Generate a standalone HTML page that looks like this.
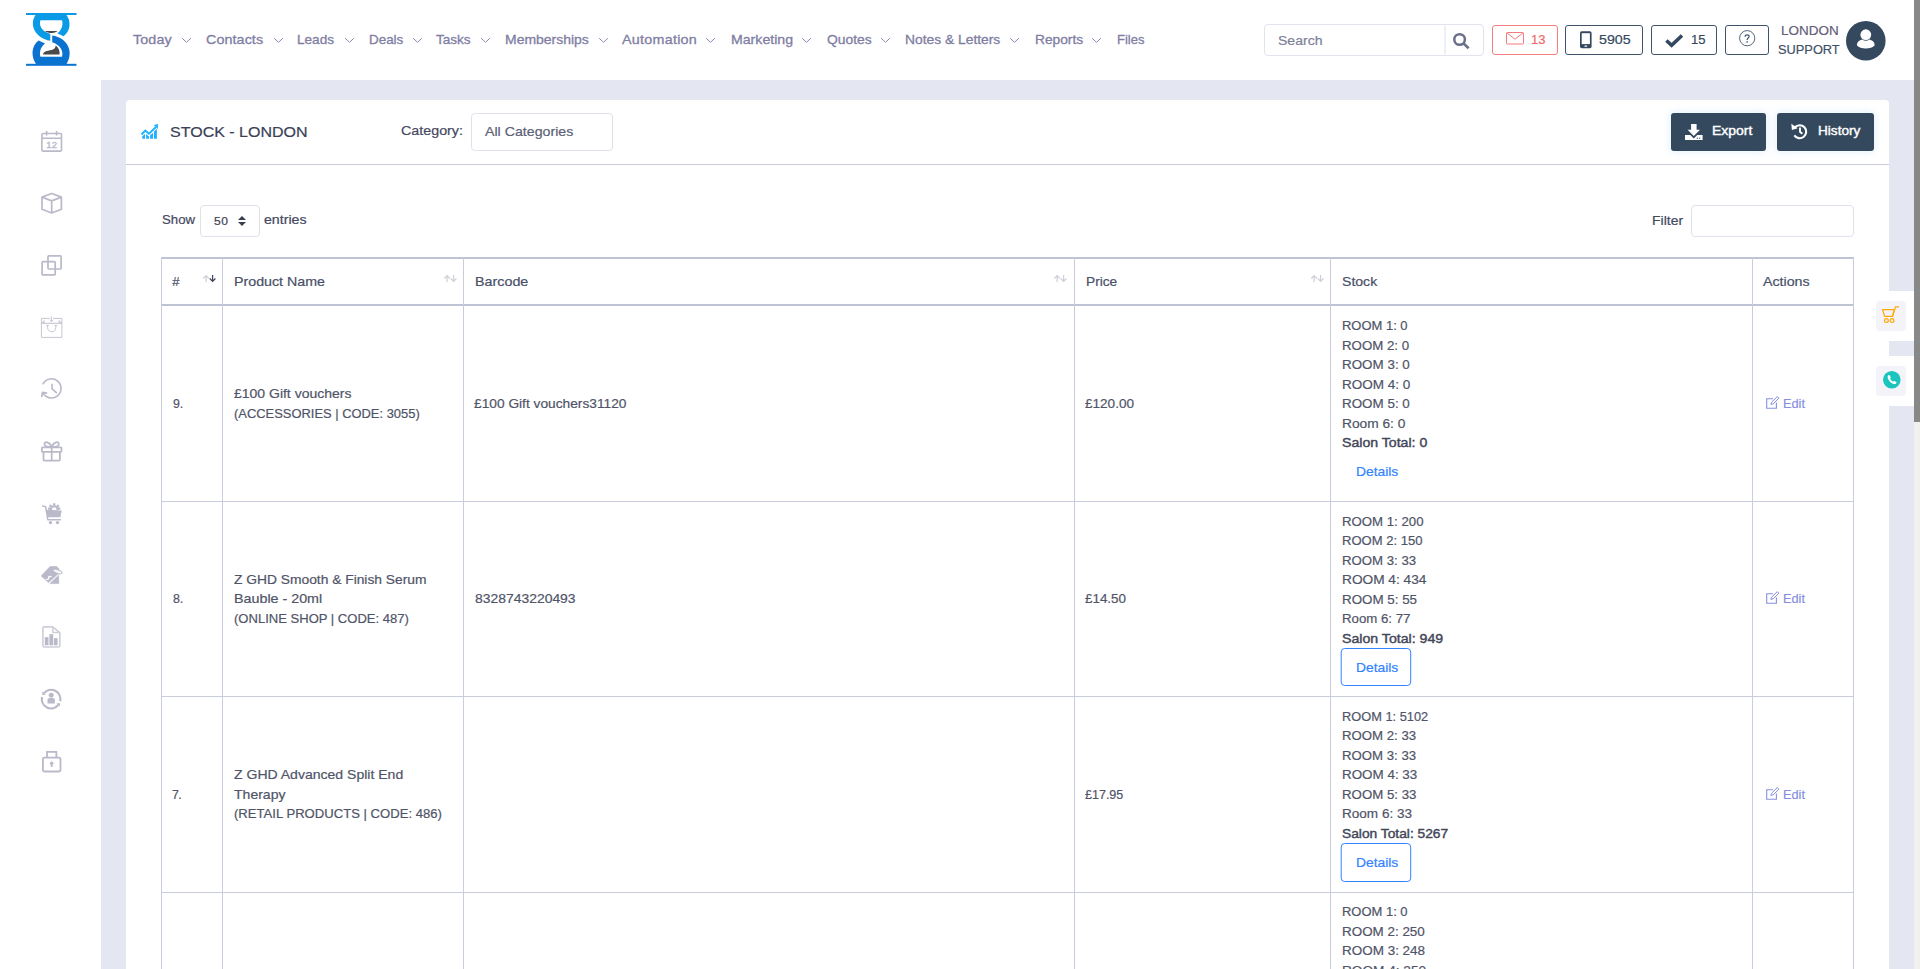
<!DOCTYPE html>
<html lang="en">
<head>
<meta charset="utf-8">
<title>Stock - London</title>
<style>
html,body{margin:0;padding:0;}
body{width:1920px;height:969px;overflow:hidden;position:relative;background:#e4e7f1;font-family:"Liberation Sans",sans-serif;}
.a{position:absolute;box-sizing:border-box;}
.t{position:absolute;white-space:nowrap;line-height:1;transform-origin:0 0;-webkit-text-stroke:0.2px currentColor;font-family:"Liberation Sans",sans-serif;}
svg{position:absolute;overflow:visible;}
.vl{position:absolute;width:1px;background:#c8ccdb;}
.hl{position:absolute;height:1px;background:#c8ccdb;}
.hl2{position:absolute;height:2px;background:#bfc4d5;}
.btn-d{position:absolute;box-sizing:border-box;border:1px solid #3283ff;border-radius:4px;background:#fff;}
</style>
</head>
<body>
<div class="a" style="left:0;top:0;width:1914px;height:80px;background:#fff;"></div>
<div class="a" style="left:0;top:80px;width:101px;height:889px;background:#fff;"></div>
<svg style="left:26px;top:12px" width="51" height="55" viewBox="0 0 51 55">
<rect x="0" y="1" width="50.5" height="2" fill="#0a9ae6"/>
<rect x="0" y="51.8" width="50.5" height="2" fill="#0a72cf"/>
<path d="M9.5 3 H40.5 C45 9 45 19 37.5 24.2 L31.3 21.3 C37 17 37 11 36 8.2 H14.5 C13 12 14 18.5 24.3 22 V28.8 C9 26 3 13 9.500 3 Z" fill="#0a9ae6"/>
<path d="M26.2 23.5 C42 26 48 40 40.5 52 H10 C5 45 5 34 12.600 28.600 L19 31.600 C13.500 36 13.500 42 14.500 44.800 H36 C37.500 40 35.500 33.500 26.200 30.300 Z" fill="#0a72cf"/>
<path d="M19 19 H31.5 C28 21.8 22.5 21.8 19 19 Z" fill="#4a4a4a"/>
<path d="M17 42.500 C17.500 38.500 23 39 27 37.500 C29 36.500 29.500 35 29.800 33.500 C33 36 34 39.500 33.500 42.500 Z" fill="#4a4a4a"/>
</svg>
<svg style="left:182.0px;top:38.3px" width="9" height="5" viewBox="0 0 9 5"><path d="M0.4 0.5 L4.5 4.3 L8.6 0.5" fill="none" stroke="#8c8aad" stroke-width="1" stroke-linecap="round" stroke-linejoin="round"/></svg>
<svg style="left:273.5px;top:38.3px" width="9" height="5" viewBox="0 0 9 5"><path d="M0.4 0.5 L4.5 4.3 L8.6 0.5" fill="none" stroke="#8c8aad" stroke-width="1" stroke-linecap="round" stroke-linejoin="round"/></svg>
<svg style="left:344.5px;top:38.3px" width="9" height="5" viewBox="0 0 9 5"><path d="M0.4 0.5 L4.5 4.3 L8.6 0.5" fill="none" stroke="#8c8aad" stroke-width="1" stroke-linecap="round" stroke-linejoin="round"/></svg>
<svg style="left:413.0px;top:38.3px" width="9" height="5" viewBox="0 0 9 5"><path d="M0.4 0.5 L4.5 4.3 L8.6 0.5" fill="none" stroke="#8c8aad" stroke-width="1" stroke-linecap="round" stroke-linejoin="round"/></svg>
<svg style="left:480.8px;top:38.3px" width="9" height="5" viewBox="0 0 9 5"><path d="M0.4 0.5 L4.5 4.3 L8.6 0.5" fill="none" stroke="#8c8aad" stroke-width="1" stroke-linecap="round" stroke-linejoin="round"/></svg>
<svg style="left:598.5px;top:38.3px" width="9" height="5" viewBox="0 0 9 5"><path d="M0.4 0.5 L4.5 4.3 L8.6 0.5" fill="none" stroke="#8c8aad" stroke-width="1" stroke-linecap="round" stroke-linejoin="round"/></svg>
<svg style="left:706.0px;top:38.3px" width="9" height="5" viewBox="0 0 9 5"><path d="M0.4 0.5 L4.5 4.3 L8.6 0.5" fill="none" stroke="#8c8aad" stroke-width="1" stroke-linecap="round" stroke-linejoin="round"/></svg>
<svg style="left:802.3px;top:38.3px" width="9" height="5" viewBox="0 0 9 5"><path d="M0.4 0.5 L4.5 4.3 L8.6 0.5" fill="none" stroke="#8c8aad" stroke-width="1" stroke-linecap="round" stroke-linejoin="round"/></svg>
<svg style="left:881.0px;top:38.3px" width="9" height="5" viewBox="0 0 9 5"><path d="M0.4 0.5 L4.5 4.3 L8.6 0.5" fill="none" stroke="#8c8aad" stroke-width="1" stroke-linecap="round" stroke-linejoin="round"/></svg>
<svg style="left:1010.3px;top:38.3px" width="9" height="5" viewBox="0 0 9 5"><path d="M0.4 0.5 L4.5 4.3 L8.6 0.5" fill="none" stroke="#8c8aad" stroke-width="1" stroke-linecap="round" stroke-linejoin="round"/></svg>
<svg style="left:1092.0px;top:38.3px" width="9" height="5" viewBox="0 0 9 5"><path d="M0.4 0.5 L4.5 4.3 L8.6 0.5" fill="none" stroke="#8c8aad" stroke-width="1" stroke-linecap="round" stroke-linejoin="round"/></svg>
<div class="a" style="left:1264px;top:24px;width:220px;height:32px;border:1px solid #e1e3ee;border-radius:4px;background:#fff;"></div>
<div class="a" style="left:1444px;top:25px;width:2px;height:30px;background:#eff0f7;"></div>
<svg style="left:1453px;top:33px" width="16" height="16" viewBox="0 0 16 16"><circle cx="6.600" cy="6.500" r="5.300" fill="none" stroke="#6a6f8a" stroke-width="2.500"/><path d="M10.500 10.400 L15.600 15.300" stroke="#6a6f8a" stroke-width="2.700" stroke-linecap="butt"/></svg>
<div class="a" style="left:1492px;top:25px;width:66px;height:30px;border:1px solid #f27e82;border-radius:3px;background:#fff;"></div>
<svg style="left:1505.500px;top:32.200px" width="18" height="12.500" viewBox="0 0 18 12.500"><rect x="0.500" y="0.500" width="17" height="11.500" rx="1" fill="none" stroke="#f47a7e" stroke-width="1"/><path d="M0.800 0.800 L9 7.200 L17.200 0.800" fill="none" stroke="#f47a7e" stroke-width="1"/></svg>
<div class="a" style="left:1565px;top:25px;width:78px;height:30px;border:1px solid #40536b;border-radius:3px;background:#fff;"></div>
<svg style="left:1579.600px;top:31.300px" width="11.600" height="17.600" viewBox="0 0 11.600 17"><rect x="0" y="0" width="11.600" height="17" rx="1.800" fill="#34495e"/><rect x="1.700" y="1.900" width="8.200" height="10.900" fill="#fff"/><rect x="4.400" y="14.200" width="2.800" height="1.300" rx="0.600" fill="#fff"/></svg>
<div class="a" style="left:1651px;top:25px;width:66px;height:30px;border:1px solid #40536b;border-radius:3px;background:#fff;"></div>
<svg style="left:1665px;top:33.800px" width="18.500" height="13.200" viewBox="0 0 18.500 13.200"><path d="M1.400 6.500 L6.600 11.300 L17 1.500" fill="none" stroke="#34495e" stroke-width="3.600" stroke-linejoin="miter"/></svg>
<div class="a" style="left:1725px;top:25px;width:44px;height:30px;border:1px solid #40536b;border-radius:3px;background:#fff;"></div>
<svg style="left:1739px;top:29.600px" width="16.400" height="16.400" viewBox="0 0 16.400 16.400"><circle cx="8.200" cy="8.200" r="7.600" fill="none" stroke="#44566e" stroke-width="0.900"/><path d="M6.100 6.700 C6.100 5.400 7 4.800 8.100 4.800 C9.300 4.800 10.100 5.500 10.100 6.500 C10.100 8 8.100 8.100 8.100 9.900" fill="none" stroke="#44566e" stroke-width="1.200"/><circle cx="8.100" cy="11.900" r="0.800" fill="#44566e"/></svg>
<svg style="left:1845.800px;top:20.600px" width="39.600" height="39.600" viewBox="0 0 39.600 39.600"><circle cx="19.800" cy="19.800" r="19.800" fill="#34495e"/><circle cx="19.800" cy="13.700" r="5.400" fill="#fff"/><path d="M10.900 24.300 C10.900 20.500 14.500 18.900 16.300 18.600 C18.300 20.300 21.300 20.300 23.300 18.600 C25.100 18.900 28.700 20.500 28.700 24.300 C27 26.600 23.500 27.600 19.800 27.600 C16.100 27.600 12.600 26.600 10.900 24.300 Z" fill="#fff"/></svg>
<svg style="left:41px;top:130.8px" width="21.4" height="20.4" viewBox="0 0 21.4 20.4"><rect x="0.900" y="2.500" width="19.600" height="17.600" rx="1" fill="none" stroke="#b9b9c9" stroke-width="1.600"/><path d="M0.900 7.200 H20.500 M5.600 0 V4.600 M15.600 0 V4.600" stroke="#b9b9c9" stroke-width="1.600" fill="none"/><text x="10.700" y="17.100" font-family="Liberation Sans" font-size="9.600" fill="#b9b9c9" stroke="#b9b9c9" stroke-width="0.350" text-anchor="middle">12</text></svg>
<svg style="left:41px;top:192.8px" width="21.4" height="20.4" viewBox="0 0 21.4 20.4"><path d="M10.700 0.500 L20.400 4.100 V16.300 L10.700 20 L1 16.300 V4.100 Z M1 4.100 L10.700 7.900 L20.400 4.100 M10.700 7.900 V20" fill="none" stroke="#b9b9c9" stroke-width="1.700" stroke-linejoin="round"/></svg>
<svg style="left:41px;top:254.8px" width="21.4" height="20.4" viewBox="0 0 21.4 20.4"><rect x="7" y="0.800" width="13.100" height="13.200" rx="0.900" fill="none" stroke="#b9b9c9" stroke-width="1.700"/><rect x="1.100" y="6.600" width="13.100" height="13.300" rx="0.900" fill="none" stroke="#b9b9c9" stroke-width="1.700"/></svg>
<svg style="left:41px;top:316px" width="21.400" height="22" viewBox="0 0 21.400 22"><path d="M8.700 2.400 H0.400 V21.400 H20.900 V2.400 H12.100" fill="none" stroke="#c6c6d3" stroke-width="1"/><path d="M0.400 7.300 H20.900" stroke="#c6c6d3" stroke-width="1.100"/><path d="M10.400 0.300 V5.600 M8.500 3.800 L10.400 5.700 L12.300 3.800" fill="none" stroke="#c6c6d3" stroke-width="1"/><path d="M0.600 7 L3.300 4.300 V7 Z M20.700 7 L18 4.300 V7 Z" fill="#d6d6e0" stroke="#c6c6d3" stroke-width="0.600"/><path d="M6.600 9.400 V11.500 C6.600 17.300 14.800 17.300 14.800 11.500 V9.400 M5.200 9.400 H8 M13.400 9.400 H16.200" fill="none" stroke="#c6c6d3" stroke-width="1"/></svg>
<svg style="left:41px;top:378.3px" width="21.4" height="21.4" viewBox="0 0 21.4 21.4"><path d="M2.100 5.700 A9.600 9.600 0 1 1 2 15" fill="none" stroke="#b9b9c9" stroke-width="1.600" stroke-linecap="round"/><path d="M0.800 18.300 L1.500 14.300 L5.500 15.100" fill="none" stroke="#b9b9c9" stroke-width="1.700" stroke-linecap="round" stroke-linejoin="round"/><path d="M11.100 5.800 V10.900 L15.900 15.100" fill="none" stroke="#b9b9c9" stroke-width="1.600"/></svg>
<svg style="left:41px;top:440.8px" width="21.4" height="20.4" viewBox="0 0 21.4 20.4"><rect x="0.900" y="6.300" width="19.600" height="4.600" rx="0.800" fill="none" stroke="#b9b9c9" stroke-width="1.800"/><path d="M2.500 10.900 V18.600 Q2.500 19.600 3.500 19.600 H17.900 Q18.900 19.600 18.900 18.600 V10.900" fill="none" stroke="#b9b9c9" stroke-width="1.800"/><path d="M10.700 6.300 V19.600" stroke="#b9b9c9" stroke-width="1.700"/><path d="M10.700 6.100 C8.800 0.600 3.300 -0.300 3.500 3.300 C3.700 5.900 7.500 6.100 10.700 6.100 C12.600 0.600 18.100 -0.300 17.900 3.300 C17.700 5.900 13.900 6.100 10.700 6.100 Z" fill="none" stroke="#b9b9c9" stroke-width="1.800"/></svg>
<svg style="left:41.500px;top:502.500px" width="20.500" height="21.500" viewBox="0 0 20.500 21.500"><defs><clipPath id="gc"><rect x="0" y="-1" width="21" height="7.900"/></clipPath></defs><path d="M0.600 2.900 L3.600 3.700 L5.800 16.700 H18.400" fill="none" stroke="#b9b9c9" stroke-width="1.500" stroke-linecap="round" stroke-linejoin="round"/><path d="M4.300 6.800 L19.700 7.600 L18.400 14.300 H5.600 Z" fill="#b9b9c9"/><circle cx="8.500" cy="19.600" r="1.700" fill="#b9b9c9"/><circle cx="15.500" cy="19.600" r="1.700" fill="#b9b9c9"/><g clip-path="url(#gc)"><circle cx="12.200" cy="6.600" r="3.300" fill="none" stroke="#b9b9c9" stroke-width="2.100"/><path d="M12.200 0.200 V2.500 M7.700 2.100 L9.300 3.700 M16.700 2.100 L15.100 3.700 M6.100 5.600 H8.400 M18.300 5.600 H16" stroke="#b9b9c9" stroke-width="2.300"/></g></svg>
<svg style="left:41px;top:566px" width="22" height="18.500" viewBox="0 0 22 18.500"><path d="M9 0.600 H15.700 L17.800 2.500 L18 7 L7.600 16.600 L0.100 9.900 Z" fill="#b9b9c9" stroke="#b9b9c9" stroke-width="0.600" stroke-linejoin="round"/><path d="M17.600 9.200 L17.800 17.600 H8.900 Z" fill="#b9b9c9" stroke="#b9b9c9" stroke-width="0.600" stroke-linejoin="round"/><path d="M5.400 13.400 L7.400 13.200 L7.900 10.700 L10 10.500" fill="none" stroke="#fff" stroke-width="1.300" stroke-linecap="round" stroke-linejoin="round"/><ellipse cx="16.400" cy="5.500" rx="4.700" ry="1.900" transform="rotate(20 16.400 5.500)" fill="#fff" fill-opacity="0.850" stroke="#b9b9c9" stroke-width="1.200"/></svg>
<svg style="left:42.300px;top:626px" width="18.600" height="21.800" viewBox="0 0 18.600 21.800"><path d="M2.300 0.900 H10.700 L17.800 6.600 V19.600 Q17.800 21 16.400 21 H2.300 Q0.900 21 0.900 19.600 V2.300 Q0.900 0.900 2.300 0.900 Z" fill="none" stroke="#cdced9" stroke-width="1.600" stroke-linejoin="round"/><path d="M10.900 1.200 V6.400 H17.400" fill="none" stroke="#cdced9" stroke-width="1.500"/><rect x="2.800" y="11.200" width="3.700" height="8.100" fill="#b9b9c9"/><rect x="7.400" y="8.200" width="3.800" height="11.100" fill="#b9b9c9"/><rect x="11.900" y="12.200" width="3.700" height="7.100" fill="#b9b9c9"/></svg>
<svg style="left:40.400px;top:688px" width="22.200" height="22.200" viewBox="0 0 22.200 22.200"><path d="M3.980 5.120 A9.300 9.300 0 0 1 20.160 13.190" fill="none" stroke="#b9b9c9" stroke-width="2.200"/><path d="M18.220 17.080 A9.300 9.300 0 0 1 2.040 9.010" fill="none" stroke="#b9b9c9" stroke-width="2.200"/><path d="M2.140 3.580 L5.820 6.660 L2.310 7.110 Z" fill="#b9b9c9"/><path d="M20.060 18.620 L16.380 15.540 L19.890 15.090 Z" fill="#b9b9c9"/><circle cx="11.200" cy="7.200" r="2.500" fill="#b9b9c9"/><path d="M7.500 15.500 V12 C7.500 10.600 8.600 10.100 11.200 10.100 C13.800 10.100 14.900 10.600 14.900 12 V15.500 Z" fill="#b9b9c9"/></svg>
<svg style="left:41.9px;top:750.7px" width="19.4" height="21.4" viewBox="0 0 19.4 21.4"><rect x="0.900" y="6.600" width="17.600" height="13.900" rx="1.500" fill="none" stroke="#b9b9c9" stroke-width="1.800"/><path d="M5 6.600 V0.900 H14.400 V6.600" fill="none" stroke="#b9b9c9" stroke-width="1.800"/><circle cx="9.700" cy="12.300" r="1.700" fill="#b9b9c9"/><rect x="8.800" y="12.500" width="1.800" height="3.600" rx="0.600" fill="#b9b9c9"/></svg>
<div class="a" style="left:126px;top:100px;width:1763px;height:900px;background:#fff;border-radius:4px 4px 0 0;"></div>
<div class="hl" style="left:126px;top:164px;width:1763px;background:#c7cbdb;"></div>
<svg style="left:141px;top:124px" width="17.200" height="15" viewBox="0 0 17.200 15"><path d="M0.500 10.500 L4.400 6.500 L7.900 9.600 L15 3" fill="none" stroke="#1fb0ff" stroke-width="1.900"/><path d="M12.700 1.100 L17 0 L16.900 4.900 Z" fill="#1fb0ff"/><path d="M1.300 14.800 V12.300 L4 10.100 V14.800 Z M5.100 14.800 V10.100 L8 12.500 V14.800 Z M9.100 14.800 V11.300 L12 8.800 V14.800 Z M13 14.800 V7.500 L15.900 4.800 V14.800 Z" fill="#1fb0ff"/></svg>
<div class="a" style="left:471px;top:113px;width:142px;height:38px;border:1px solid #dfe2ec;border-radius:4px;background:#fff;"></div>
<div class="a" style="left:1671px;top:113px;width:95px;height:38px;border-radius:3px;background:#34495e;box-shadow:0 0 10px rgba(150,200,245,0.32);"></div>
<div class="a" style="left:1777px;top:113px;width:97px;height:38px;border-radius:3px;background:#34495e;box-shadow:0 0 10px rgba(150,200,245,0.32);"></div>
<svg style="left:1684.600px;top:123.900px" width="17.600" height="16.100" viewBox="0 0 17.600 16.100"><path d="M6.100 0 H11.600 V5.700 H15 L8.800 12 L2.600 5.700 H6.100 Z" fill="#fff"/><path d="M0 11.100 H5.300 L8.800 14.600 L12.300 11.100 H17.600 V16.100 H0 Z" fill="#fff"/><rect x="11.700" y="13.700" width="1.300" height="1" fill="#34495e"/><rect x="14" y="13.700" width="1.300" height="1" fill="#34495e"/></svg>
<svg style="left:1790.600px;top:123.300px" width="17" height="16.500" viewBox="0 0 17 16.500"><path d="M3.900 4.300 A6.500 6.500 0 1 1 3.300 12.300" fill="none" stroke="#fff" stroke-width="2.100"/><path d="M0.300 0.800 L0.900 7 L6.800 5.300 Z" fill="#fff"/><path d="M9 4.500 V8.700 L11.400 10.700" fill="none" stroke="#fff" stroke-width="1.900"/></svg>
<div class="a" style="left:199.500px;top:205px;width:60px;height:31.500px;border:1px solid #dfe2ec;border-radius:4px;background:#fff;"></div>
<svg style="left:238.300px;top:216.200px" width="8" height="10" viewBox="0 0 8 10"><path d="M0 4 L4 0 L8 4 Z M0 6 L4 10 L8 6 Z" fill="#3a3d50"/></svg>
<div class="a" style="left:1691px;top:205px;width:163px;height:32px;border:1px solid #dfe2ec;border-radius:4px;background:#fff;"></div>
<div class="hl2" style="left:161px;top:257px;width:1693px;"></div>
<div class="hl2" style="left:161px;top:304px;width:1693px;"></div>
<div class="hl" style="left:161px;top:501px;width:1693px;"></div>
<div class="hl" style="left:161px;top:696px;width:1693px;"></div>
<div class="hl" style="left:161px;top:892px;width:1693px;"></div>
<div class="vl" style="left:161px;top:257px;height:712px;"></div>
<div class="vl" style="left:222px;top:257px;height:712px;"></div>
<div class="vl" style="left:463px;top:257px;height:712px;"></div>
<div class="vl" style="left:1074px;top:257px;height:712px;"></div>
<div class="vl" style="left:1330px;top:257px;height:712px;"></div>
<div class="vl" style="left:1752px;top:257px;height:712px;"></div>
<div class="vl" style="left:1853px;top:257px;height:712px;"></div>
<svg style="left:203.0px;top:275px" width="13" height="7" viewBox="0 0 13 7"><path d="M3.1 7 V0.8 M0.3 3.5 L3.1 0.6 L5.900 3.500" fill="none" stroke="#cfd0d8" stroke-width="1.200"/><path d="M9.600 0 V6.200 M6.800 3.500 L9.600 6.400 L12.400 3.500" fill="none" stroke="#3f4254" stroke-width="1.200"/></svg>
<svg style="left:443.5px;top:275px" width="13" height="7" viewBox="0 0 13 7"><path d="M3.1 7 V0.8 M0.3 3.5 L3.1 0.6 L5.900 3.500" fill="none" stroke="#cfd0d8" stroke-width="1.200"/><path d="M9.600 0 V6.200 M6.800 3.500 L9.600 6.400 L12.400 3.500" fill="none" stroke="#cfd0d8" stroke-width="1.200"/></svg>
<svg style="left:1054.3px;top:275px" width="13" height="7" viewBox="0 0 13 7"><path d="M3.1 7 V0.8 M0.3 3.5 L3.1 0.6 L5.900 3.500" fill="none" stroke="#cfd0d8" stroke-width="1.200"/><path d="M9.600 0 V6.200 M6.800 3.500 L9.600 6.400 L12.400 3.500" fill="none" stroke="#cfd0d8" stroke-width="1.200"/></svg>
<svg style="left:1311.0px;top:275px" width="13" height="7" viewBox="0 0 13 7"><path d="M3.1 7 V0.8 M0.3 3.5 L3.1 0.6 L5.900 3.500" fill="none" stroke="#cfd0d8" stroke-width="1.200"/><path d="M9.600 0 V6.200 M6.800 3.500 L9.600 6.400 L12.400 3.500" fill="none" stroke="#cfd0d8" stroke-width="1.200"/></svg>
<svg style="left:1340px;top:648px" width="72" height="38" viewBox="0 0 72 38"><rect x="1.200" y="0.500" width="69.500" height="37" rx="3.500" fill="#fff" stroke="#3283ff" stroke-width="1"/></svg>
<svg style="left:1340px;top:843px" width="72" height="39" viewBox="0 0 72 39"><rect x="1.200" y="0.500" width="69.500" height="38" rx="3.500" fill="#fff" stroke="#3283ff" stroke-width="1"/></svg>
<svg style="left:1766px;top:396.0px" width="14" height="13" viewBox="0 0 14 13"><path d="M6.8 2.8 H0.7 V12.3 H10.4 V6.6" fill="none" stroke="#8690df" stroke-width="1.1"/><path d="M4.9 8.4 L5.5 6.3 L11.3 0.6 L12.9 2.2 L7.1 7.9 Z" fill="none" stroke="#8690df" stroke-width="1"/></svg>
<svg style="left:1766px;top:591.0px" width="14" height="13" viewBox="0 0 14 13"><path d="M6.8 2.8 H0.7 V12.3 H10.4 V6.6" fill="none" stroke="#8690df" stroke-width="1.1"/><path d="M4.9 8.4 L5.5 6.3 L11.3 0.6 L12.9 2.2 L7.1 7.9 Z" fill="none" stroke="#8690df" stroke-width="1"/></svg>
<svg style="left:1766px;top:787.0px" width="14" height="13" viewBox="0 0 14 13"><path d="M6.8 2.8 H0.7 V12.3 H10.4 V6.6" fill="none" stroke="#8690df" stroke-width="1.1"/><path d="M4.9 8.4 L5.5 6.3 L11.3 0.6 L12.9 2.2 L7.1 7.9 Z" fill="none" stroke="#8690df" stroke-width="1"/></svg>
<div class="a" style="left:1868px;top:291px;width:46px;height:50px;background:#fff;border-radius:4px 0 0 4px;"></div>
<div class="a" style="left:1876px;top:301px;width:30px;height:30px;background:#f3f3f9;border-radius:4px;"></div>
<div class="a" style="left:1868px;top:356px;width:46px;height:50px;background:#fff;border-radius:4px 0 0 4px;"></div>
<div class="a" style="left:1876px;top:366px;width:30px;height:30px;background:#f3f3f9;border-radius:4px;"></div>
<svg style="left:1882px;top:305.800px" width="17.500" height="17.500" viewBox="0 0 17.500 17.500"><path d="M0.600 3.600 H12.300 L10.500 10.300 H2.600 Z" fill="none" stroke="#ffa800" stroke-width="1.200" stroke-linejoin="round"/><path d="M10.500 10.300 L13.600 0.800 H17" fill="none" stroke="#ffa800" stroke-width="1.200"/><circle cx="4.400" cy="14.600" r="1.900" fill="none" stroke="#ffa800" stroke-width="1.200"/><circle cx="10" cy="14.600" r="1.900" fill="none" stroke="#ffa800" stroke-width="1.200"/></svg>
<svg style="left:1882.600px;top:370.600px" width="17.600" height="17.600" viewBox="0 0 17.600 17.600"><circle cx="8.800" cy="8.800" r="8.800" fill="#1bc5bd"/><path d="M5.200 4.400 C4 5.400 4.600 8 6.900 10.500 C9.300 13 11.900 13.700 13 12.600 L13.400 12 C13.700 11.600 13.600 11.200 13.200 11 L11.400 10 C11 9.800 10.700 9.900 10.400 10.200 L10 10.700 C9.200 10.500 7.200 8.500 7 7.600 L7.500 7.200 C7.800 6.900 7.900 6.600 7.700 6.200 L6.700 4.400 C6.500 4 6 3.900 5.700 4.100 Z" fill="#fff"/></svg>
<div class="a" style="left:1914px;top:0;width:6px;height:969px;background:#f1f1f1;"></div>
<div class="a" style="left:1914px;top:0;width:6px;height:422px;background:#888888;"></div>
<span class="t" id="t0" style="left:133.10px;top:33.20px;font-size:13px;color:#807ea3;font-weight:400;letter-spacing:0.120px;transform:scaleX(1.1000);-webkit-text-stroke:0.3px #807ea3;">Today</span>
<span class="t" id="t1" style="left:206.00px;top:33.20px;font-size:13px;color:#807ea3;font-weight:400;letter-spacing:0.085px;transform:scaleX(1.1000);-webkit-text-stroke:0.3px #807ea3;">Contacts</span>
<span class="t" id="t2" style="left:297.30px;top:33.20px;font-size:13px;color:#807ea3;font-weight:400;letter-spacing:0.000px;transform:scaleX(1.0446);-webkit-text-stroke:0.3px #807ea3;">Leads</span>
<span class="t" id="t3" style="left:368.50px;top:33.20px;font-size:13px;color:#807ea3;font-weight:400;letter-spacing:0.000px;transform:scaleX(1.0316);-webkit-text-stroke:0.3px #807ea3;">Deals</span>
<span class="t" id="t4" style="left:436.00px;top:33.20px;font-size:13px;color:#807ea3;font-weight:400;letter-spacing:0.000px;transform:scaleX(1.0411);-webkit-text-stroke:0.3px #807ea3;">Tasks</span>
<span class="t" id="t5" style="left:504.80px;top:33.20px;font-size:13px;color:#807ea3;font-weight:400;letter-spacing:0.000px;transform:scaleX(1.0739);-webkit-text-stroke:0.3px #807ea3;">Memberships</span>
<span class="t" id="t6" style="left:622.00px;top:33.20px;font-size:13px;color:#807ea3;font-weight:400;letter-spacing:0.248px;transform:scaleX(1.1000);-webkit-text-stroke:0.3px #807ea3;">Automation</span>
<span class="t" id="t7" style="left:730.60px;top:33.20px;font-size:13px;color:#807ea3;font-weight:400;letter-spacing:0.000px;transform:scaleX(1.0862);-webkit-text-stroke:0.3px #807ea3;">Marketing</span>
<span class="t" id="t8" style="left:826.50px;top:33.20px;font-size:13px;color:#807ea3;font-weight:400;letter-spacing:0.000px;transform:scaleX(1.0639);-webkit-text-stroke:0.3px #807ea3;">Quotes</span>
<span class="t" id="t9" style="left:905.30px;top:33.20px;font-size:13px;color:#807ea3;font-weight:400;letter-spacing:0.000px;transform:scaleX(1.0635);-webkit-text-stroke:0.3px #807ea3;">Notes &amp; Letters</span>
<span class="t" id="t10" style="left:1034.50px;top:33.20px;font-size:13px;color:#807ea3;font-weight:400;letter-spacing:-0.000px;transform:scaleX(1.0564);-webkit-text-stroke:0.3px #807ea3;">Reports</span>
<span class="t" id="t11" style="left:1116.50px;top:33.20px;font-size:13px;color:#807ea3;font-weight:400;letter-spacing:0.000px;transform:scaleX(1.0017);-webkit-text-stroke:0.3px #807ea3;">Files</span>
<span class="t" id="t12" style="left:1278.10px;top:34.00px;font-size:13px;color:#7e8299;font-weight:400;letter-spacing:0.000px;transform:scaleX(1.0800);">Search</span>
<span class="t" id="t13" style="left:1530.70px;top:33.30px;font-size:13px;color:#f0666b;font-weight:400;letter-spacing:0.000px;transform:scaleX(0.9952);">13</span>
<span class="t" id="t14" style="left:1598.50px;top:33.30px;font-size:13px;color:#34495e;font-weight:400;letter-spacing:-0.000px;transform:scaleX(1.0926);">5905</span>
<span class="t" id="t15" style="left:1690.70px;top:33.30px;font-size:13px;color:#34495e;font-weight:400;letter-spacing:0.000px;transform:scaleX(1.0022);">15</span>
<span class="t" id="t16" style="left:1780.50px;top:24.55px;font-size:12.7px;color:#645d7b;font-weight:400;letter-spacing:-0.000px;transform:scaleX(1.0611);">LONDON</span>
<span class="t" id="t17" style="left:1777.70px;top:43.65px;font-size:12.7px;color:#3f5167;font-weight:400;letter-spacing:-0.000px;transform:scaleX(1.0097);">SUPPORT</span>
<span class="t" id="t18" style="left:169.50px;top:124.59px;font-size:14.9px;color:#3b3f58;font-weight:400;letter-spacing:0.000px;transform:scaleX(1.0753);">STOCK - LONDON</span>
<span class="t" id="t19" style="left:401.10px;top:124.00px;font-size:13px;color:#454960;font-weight:400;letter-spacing:0.000px;transform:scaleX(1.0998);">Category:</span>
<span class="t" id="t20" style="left:484.80px;top:124.80px;font-size:13px;color:#5b5f75;font-weight:400;letter-spacing:0.000px;transform:scaleX(1.0910);">All Categories</span>
<span class="t" id="t21" style="left:1712.30px;top:124.40px;font-size:13px;color:#ffffff;font-weight:400;letter-spacing:0.000px;transform:scaleX(1.0751);-webkit-text-stroke:0.4px #fff;">Export</span>
<span class="t" id="t22" style="left:1817.80px;top:124.40px;font-size:13px;color:#ffffff;font-weight:400;letter-spacing:0.000px;transform:scaleX(1.0457);-webkit-text-stroke:0.4px #fff;">History</span>
<span class="t" id="t23" style="left:161.80px;top:213.20px;font-size:13px;color:#454960;font-weight:400;letter-spacing:0.000px;transform:scaleX(1.0144);">Show</span>
<span class="t" id="t24" style="left:213.60px;top:215.69px;font-size:11px;color:#3f4254;font-weight:400;letter-spacing:0.386px;transform:scaleX(1.1000);">50</span>
<span class="t" id="t25" style="left:264.00px;top:213.20px;font-size:13px;color:#454960;font-weight:400;letter-spacing:0.000px;transform:scaleX(1.0889);">entries</span>
<span class="t" id="t26" style="left:1651.70px;top:214.00px;font-size:13px;color:#454960;font-weight:400;letter-spacing:-0.000px;transform:scaleX(1.0765);">Filter</span>
<span class="t" id="t27" style="left:172.30px;top:274.90px;font-size:13px;color:#485068;font-weight:400;letter-spacing:0.000px;transform:scaleX(1.0000);">#</span>
<span class="t" id="t28" style="left:234.30px;top:274.90px;font-size:13px;color:#485068;font-weight:400;letter-spacing:0.000px;transform:scaleX(1.0951);">Product Name</span>
<span class="t" id="t29" style="left:474.80px;top:274.90px;font-size:13px;color:#485068;font-weight:400;letter-spacing:0.005px;transform:scaleX(1.1000);">Barcode</span>
<span class="t" id="t30" style="left:1085.60px;top:274.90px;font-size:13px;color:#485068;font-weight:400;letter-spacing:-0.000px;transform:scaleX(1.0532);">Price</span>
<span class="t" id="t31" style="left:1341.70px;top:274.90px;font-size:13px;color:#485068;font-weight:400;letter-spacing:0.000px;transform:scaleX(1.0826);">Stock</span>
<span class="t" id="t32" style="left:1763.40px;top:274.90px;font-size:13px;color:#485068;font-weight:400;letter-spacing:0.000px;transform:scaleX(1.0929);">Actions</span>
<span class="t" id="t33" style="left:172.80px;top:396.70px;font-size:13px;color:#505468;font-weight:400;letter-spacing:0.000px;transform:scaleX(0.9499);">9.</span>
<span class="t" id="t34" style="left:233.60px;top:386.70px;font-size:13px;color:#505468;font-weight:400;letter-spacing:0.000px;transform:scaleX(1.0758);">£100 Gift vouchers</span>
<span class="t" id="t35" style="left:233.60px;top:406.70px;font-size:13px;color:#505468;font-weight:400;letter-spacing:0.000px;transform:scaleX(0.9937);">(ACCESSORIES | CODE: 3055)</span>
<span class="t" id="t36" style="left:474.00px;top:396.70px;font-size:13px;color:#505468;font-weight:400;letter-spacing:0.000px;transform:scaleX(1.0567);">£100 Gift vouchers31120</span>
<span class="t" id="t37" style="left:1084.80px;top:396.70px;font-size:13px;color:#505468;font-weight:400;letter-spacing:0.000px;transform:scaleX(1.0426);">£120.00</span>
<span class="t" id="t38" style="left:172.80px;top:591.70px;font-size:13px;color:#505468;font-weight:400;letter-spacing:0.000px;transform:scaleX(0.9499);">8.</span>
<span class="t" id="t39" style="left:233.60px;top:572.70px;font-size:13px;color:#505468;font-weight:400;letter-spacing:0.000px;transform:scaleX(1.0616);">Z GHD Smooth &amp; Finish Serum</span>
<span class="t" id="t40" style="left:233.60px;top:591.70px;font-size:13px;color:#505468;font-weight:400;letter-spacing:0.000px;transform:scaleX(1.0995);">Bauble - 20ml</span>
<span class="t" id="t41" style="left:233.60px;top:611.70px;font-size:13px;color:#505468;font-weight:400;letter-spacing:0.000px;transform:scaleX(1.0031);">(ONLINE SHOP | CODE: 487)</span>
<span class="t" id="t42" style="left:474.50px;top:591.70px;font-size:13px;color:#505468;font-weight:400;letter-spacing:0.000px;transform:scaleX(1.0702);">8328743220493</span>
<span class="t" id="t43" style="left:1084.80px;top:591.70px;font-size:13px;color:#505468;font-weight:400;letter-spacing:0.000px;transform:scaleX(1.0310);">£14.50</span>
<span class="t" id="t44" style="left:172.30px;top:787.70px;font-size:13px;color:#505468;font-weight:400;letter-spacing:-0.525px;transform:scaleX(0.9400);">7.</span>
<span class="t" id="t45" style="left:233.60px;top:767.70px;font-size:13px;color:#505468;font-weight:400;letter-spacing:0.000px;transform:scaleX(1.0790);">Z GHD Advanced Split End</span>
<span class="t" id="t46" style="left:233.60px;top:787.70px;font-size:13px;color:#505468;font-weight:400;letter-spacing:0.000px;transform:scaleX(1.0796);">Therapy</span>
<span class="t" id="t47" style="left:233.60px;top:806.70px;font-size:13px;color:#505468;font-weight:400;letter-spacing:-0.000px;transform:scaleX(1.0075);">(RETAIL PRODUCTS | CODE: 486)</span>
<span class="t" id="t48" style="left:1084.80px;top:787.70px;font-size:13px;color:#505468;font-weight:400;letter-spacing:0.000px;transform:scaleX(0.9631);">£17.95</span>
<span class="t" id="t49" style="left:1341.70px;top:318.70px;font-size:13px;color:#505468;font-weight:400;letter-spacing:0.000px;transform:scaleX(0.9977);">ROOM 1: 0</span>
<span class="t" id="t50" style="left:1341.70px;top:338.70px;font-size:13px;color:#505468;font-weight:400;letter-spacing:0.000px;transform:scaleX(1.0205);">ROOM 2: 0</span>
<span class="t" id="t51" style="left:1341.70px;top:357.70px;font-size:13px;color:#505468;font-weight:400;letter-spacing:0.000px;transform:scaleX(1.0312);">ROOM 3: 0</span>
<span class="t" id="t52" style="left:1341.70px;top:377.70px;font-size:13px;color:#505468;font-weight:400;letter-spacing:0.000px;transform:scaleX(1.0403);">ROOM 4: 0</span>
<span class="t" id="t53" style="left:1341.70px;top:396.70px;font-size:13px;color:#505468;font-weight:400;letter-spacing:0.000px;transform:scaleX(1.0312);">ROOM 5: 0</span>
<span class="t" id="t54" style="left:1341.70px;top:416.70px;font-size:13px;color:#505468;font-weight:400;letter-spacing:-0.000px;transform:scaleX(1.0569);">Room 6: 0</span>
<span class="t" id="t55" style="left:1341.70px;top:435.70px;font-size:13px;color:#3f4254;font-weight:400;letter-spacing:0.000px;transform:scaleX(1.0860);-webkit-text-stroke:0.42px #454a5e;">Salon Total: 0</span>
<span class="t" id="t56" style="left:1341.70px;top:514.70px;font-size:13px;color:#505468;font-weight:400;letter-spacing:0.000px;transform:scaleX(1.0162);">ROOM 1: 200</span>
<span class="t" id="t57" style="left:1341.70px;top:533.70px;font-size:13px;color:#505468;font-weight:400;letter-spacing:0.000px;transform:scaleX(1.0049);">ROOM 2: 150</span>
<span class="t" id="t58" style="left:1341.70px;top:553.70px;font-size:13px;color:#505468;font-weight:400;letter-spacing:0.000px;transform:scaleX(1.0155);">ROOM 3: 33</span>
<span class="t" id="t59" style="left:1341.70px;top:572.70px;font-size:13px;color:#505468;font-weight:400;letter-spacing:0.000px;transform:scaleX(1.0523);">ROOM 4: 434</span>
<span class="t" id="t60" style="left:1341.70px;top:592.70px;font-size:13px;color:#505468;font-weight:400;letter-spacing:0.000px;transform:scaleX(1.0278);">ROOM 5: 55</span>
<span class="t" id="t61" style="left:1341.70px;top:611.70px;font-size:13px;color:#505468;font-weight:400;letter-spacing:0.000px;transform:scaleX(1.0178);">Room 6: 77</span>
<span class="t" id="t62" style="left:1341.70px;top:631.70px;font-size:13px;color:#3f4254;font-weight:400;letter-spacing:0.000px;transform:scaleX(1.0882);-webkit-text-stroke:0.42px #454a5e;">Salon Total: 949</span>
<span class="t" id="t63" style="left:1341.70px;top:709.70px;font-size:13px;color:#505468;font-weight:400;letter-spacing:0.000px;transform:scaleX(0.9858);">ROOM 1: 5102</span>
<span class="t" id="t64" style="left:1341.70px;top:728.70px;font-size:13px;color:#505468;font-weight:400;letter-spacing:0.000px;transform:scaleX(1.0155);">ROOM 2: 33</span>
<span class="t" id="t65" style="left:1341.70px;top:748.70px;font-size:13px;color:#505468;font-weight:400;letter-spacing:0.000px;transform:scaleX(1.0155);">ROOM 3: 33</span>
<span class="t" id="t66" style="left:1341.70px;top:767.70px;font-size:13px;color:#505468;font-weight:400;letter-spacing:0.000px;transform:scaleX(1.0319);">ROOM 4: 33</span>
<span class="t" id="t67" style="left:1341.70px;top:787.70px;font-size:13px;color:#505468;font-weight:400;letter-spacing:0.000px;transform:scaleX(1.0196);">ROOM 5: 33</span>
<span class="t" id="t68" style="left:1341.70px;top:806.70px;font-size:13px;color:#505468;font-weight:400;letter-spacing:0.000px;transform:scaleX(1.0416);">Room 6: 33</span>
<span class="t" id="t69" style="left:1341.70px;top:826.70px;font-size:13px;color:#3f4254;font-weight:400;letter-spacing:0.000px;transform:scaleX(1.0595);-webkit-text-stroke:0.42px #454a5e;">Salon Total: 5267</span>
<span class="t" id="t70" style="left:1341.70px;top:904.70px;font-size:13px;color:#505468;font-weight:400;letter-spacing:0.000px;transform:scaleX(0.9977);">ROOM 1: 0</span>
<span class="t" id="t71" style="left:1341.70px;top:924.70px;font-size:13px;color:#505468;font-weight:400;letter-spacing:0.000px;transform:scaleX(1.0324);">ROOM 2: 250</span>
<span class="t" id="t72" style="left:1341.70px;top:943.70px;font-size:13px;color:#505468;font-weight:400;letter-spacing:0.000px;transform:scaleX(1.0361);">ROOM 3: 248</span>
<span class="t" id="t73" style="left:1341.70px;top:963.70px;font-size:13px;color:#505468;font-weight:400;letter-spacing:0.000px;transform:scaleX(1.0486);">ROOM 4: 250</span>
<span class="t" id="t74" style="left:1356.10px;top:464.70px;font-size:13px;color:#3283ff;font-weight:400;letter-spacing:0.000px;transform:scaleX(1.0642);">Details</span>
<span class="t" id="t75" style="left:1356.10px;top:660.70px;font-size:13px;color:#3283ff;font-weight:400;letter-spacing:0.000px;transform:scaleX(1.0642);">Details</span>
<span class="t" id="t76" style="left:1356.10px;top:855.70px;font-size:13px;color:#3283ff;font-weight:400;letter-spacing:0.000px;transform:scaleX(1.0642);">Details</span>
<span class="t" id="t77" style="left:1782.80px;top:396.70px;font-size:13px;color:#8690df;font-weight:400;letter-spacing:0.000px;transform:scaleX(0.9819);">Edit</span>
<span class="t" id="t78" style="left:1782.80px;top:591.70px;font-size:13px;color:#8690df;font-weight:400;letter-spacing:0.000px;transform:scaleX(0.9819);">Edit</span>
<span class="t" id="t79" style="left:1782.80px;top:787.70px;font-size:13px;color:#8690df;font-weight:400;letter-spacing:0.000px;transform:scaleX(0.9819);">Edit</span>
</body>
</html>
